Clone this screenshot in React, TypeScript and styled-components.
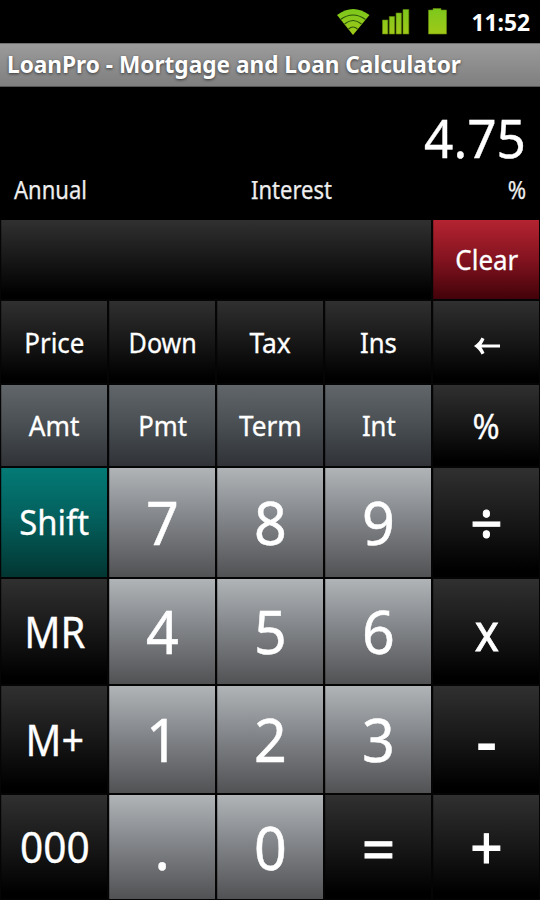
import React from "react";
import styled, { createGlobalStyle } from "styled-components";

const GlobalStyle = createGlobalStyle`
  * { box-sizing: border-box; }
  body { margin: 0; background: #000; }
`;

const Screen = styled.main`
  width: 540px;
  height: 900px;
  display: flex;
  flex-direction: column;
  overflow: hidden;
  background: #000;
  color: #fff;
  font-family: "Noto Sans", sans-serif;
`;

const StatusBar = styled.header`
  height: 43px;
  display: flex;
  align-items: center;
  justify-content: flex-end;
  padding-right: 10px;
`;

const StatusIcons = styled.svg`
  width: 116px;
  height: 43px;
  margin-right: 19px;
`;

const Clock = styled.time`
  display: flex;
  justify-content: flex-end;
  width: 59px;
  font-size: 24px;
  line-height: 43px;
  font-weight: 700;
  white-space: nowrap;
  transform: scaleX(0.95);
  transform-origin: right center;
`;

const TitleBar = styled.div`
  height: 44px;
  display: flex;
  align-items: center;
  padding: 0 0 3px 7px;
  background: linear-gradient(#9b9b9b, #7f7f7f);
  border-top: 1px solid #6f6f6f;
  border-bottom: 1px solid #555;
`;

const Title = styled.h1`
  margin: 0;
  font-size: 23.5px;
  line-height: 32px;
  font-weight: 700;
  white-space: nowrap;
  transform: scaleX(0.963);
  transform-origin: left center;
  text-shadow: 0 1px 3px rgba(0, 0, 0, 0.6);
`;

const Display = styled.section`
  height: 133px;
  padding: 18px 14px 0;
`;

const Value = styled.output`
  display: block;
  height: 67px;
  font-size: 53.5px;
  line-height: 66px;
  text-align: right;
  transform: scaleX(0.96);
  transform-origin: right center;
  -webkit-text-stroke: 0.4px currentColor;
`;

const Captions = styled.div`
  display: grid;
  grid-template-columns: 100px 355px 57px;
  font-size: 24.5px;
  line-height: 36px;
  color: #eee;
`;

const Caption = styled.span<{ $side: "left" | "center" | "right" }>`
  text-align: ${(p) => p.$side};
  transform: scaleX(0.9);
  transform-origin: ${(p) => p.$side} center;
  -webkit-text-stroke: 0.25px currentColor;
`;

const Keypad = styled.section`
  height: 680px;
  display: grid;
  grid-template-columns: repeat(5, 106px);
  grid-template-rows: 79px 82px 81px 109px 105px 107px 104px;
  gap: 2px;
  padding: 0 0 0 1px;
  background: #050505;
`;

type Tone = "black" | "red" | "slate" | "teal" | "silver";

const tones: Record<Tone, string> = {
  black: "linear-gradient(#303030, #171717 50%, #000 94%)",
  red: "linear-gradient(#b52331, #83131f 50%, #420209)",
  slate: "linear-gradient(#606669, #484e52 50%, #303237)",
  teal: "linear-gradient(#047a76, #03605d 45%, #023632)",
  silver: "linear-gradient(#b0b4b7, #83868a 45%, #515254)",
};

const Key = styled.button<{ $tone: Tone; $span?: number }>`
  grid-column: span ${(p) => p.$span ?? 1};
  display: flex;
  align-items: center;
  justify-content: center;
  min-width: 0;
  padding: 0 0 0 1px;
  border: 0;
  color: #fff;
  font-family: inherit;
  background: ${(p) => tones[p.$tone]};
  box-shadow: inset 1px 0 rgba(0, 0, 0, 0.2);
`;

const Label = styled.span<{ $size: number; $stretch: number; $shift: number; $stroke: number }>`
  font-size: ${(p) => p.$size}px;
  line-height: 1;
  white-space: nowrap;
  transform: translateY(${(p) => p.$shift}px) scaleX(${(p) => p.$stretch});
  -webkit-text-stroke: ${(p) => p.$stroke}px currentColor;
`;

const Arrow = styled.svg`
  width: 28px;
  height: 20px;
  transform: translateY(4px);
`;

interface KeySpec {
  text: string;
  tone: Tone;
  size?: number;
  span?: number;
  stretch?: number;
  shift?: number;
  stroke?: number;
}

const digit = (text: string): KeySpec => ({
  text,
  tone: "silver",
  size: 61,
  stretch: 0.94,
  shift: -1,
  stroke: 0.5,
});

const keys: KeySpec[] = [
  { text: "", tone: "black", span: 4 },
  { text: "Clear", tone: "red", stretch: 0.96 },
  { text: "Price", tone: "black", stretch: 0.96 },
  { text: "Down", tone: "black", stretch: 0.93 },
  { text: "Tax", tone: "black", stretch: 0.98 },
  { text: "Ins", tone: "black", stretch: 0.95 },
  { text: "←", tone: "black" },
  { text: "Amt", tone: "slate", stretch: 0.97 },
  { text: "Pmt", tone: "slate", stretch: 0.95 },
  { text: "Term", tone: "slate", stretch: 0.97 },
  { text: "Int", tone: "slate", stretch: 0.95 },
  { text: "%", tone: "black", size: 34, stretch: 0.96 },
  { text: "Shift", tone: "teal", size: 34, stretch: 0.965, shift: -1 },
  digit("7"),
  digit("8"),
  digit("9"),
  { text: "÷", tone: "black", size: 61, stroke: 1, stretch: 0.93, shift: -1 },
  { text: "MR", tone: "black", size: 43, stretch: 0.93 },
  digit("4"),
  digit("5"),
  digit("6"),
  { text: "x", tone: "black", size: 52, stroke: 0.8, stretch: 0.88, shift: -1 },
  { text: "M+", tone: "black", size: 43, stretch: 0.92 },
  digit("1"),
  digit("2"),
  digit("3"),
  { text: "-", tone: "black", size: 61, stroke: 1.8 },
  { text: "000", tone: "black", size: 43, stretch: 0.945, shift: -1 },
  digit("."),
  digit("0"),
  { text: "=", tone: "black", size: 61, stroke: 1, stretch: 0.96 },
  { text: "+", tone: "black", size: 61, stroke: 1.2, stretch: 0.93, shift: -1 },
];

export default function App() {
  return (
    <Screen>
      <GlobalStyle />
      <StatusBar>
        <StatusIcons viewBox="336 0 116 43" aria-hidden>
          <defs>
            <linearGradient id="lime" x1="0" y1="0" x2="0" y2="1">
              <stop offset="0" stopColor="#7cc81c" />
              <stop offset="1" stopColor="#a0c818" />
            </linearGradient>
          </defs>
          <path d="M337 15Q353 3 369.500 15L353 35Z" fill="url(#lime)" />
          <path
            d="M340.500 19.500Q353 10.500 365.500 19.500M344.500 24Q353 17 361.500 24M348.500 29Q353 25 357.500 29"
            fill="none"
            stroke="#27520a"
            strokeWidth="1.100"
          />
          <path
            d="M382.500 20h5.300v14h-5.300zM389.300 16.500h5.300v17.500h-5.300zM396.100 13h5.300v21h-5.300zM403 9.500h5.800v24.500h-5.800z"
            fill="url(#lime)"
            stroke="#668a0c"
            strokeWidth=".6"
          />
          <path
            d="M428.500 10H433V8.500h8V10h5.500v24h-18z"
            fill="url(#lime)"
            stroke="#668a0c"
            strokeWidth=".6"
          />
        </StatusIcons>
        <Clock>11:52</Clock>
      </StatusBar>
      <TitleBar>
        <Title>LoanPro - Mortgage and Loan Calculator</Title>
      </TitleBar>
      <Display>
        <Value>4.75</Value>
        <Captions>
          <Caption $side="left">Annual</Caption>
          <Caption $side="center">Interest</Caption>
          <Caption $side="right">%</Caption>
        </Captions>
      </Display>
      <Keypad>
        {keys.map((k, i) => (
          <Key key={i} $tone={k.tone} $span={k.span} aria-label={k.text || "Blank"}>
            {k.text === "←" ? (
              <Arrow viewBox="0 0 28 20">
                <path
                  d="M1 10Q6 7 8.500 1.500L11.500 3Q10 6.500 8.500 8.500H27V11.500H8.500Q10 13.500 11.500 17L8.500 18.500Q6 13 1 10Z"
                  fill="#fff"
                />
              </Arrow>
            ) : (
              <Label
                $size={k.size ?? 27}
                $stretch={k.stretch ?? 1}
                $shift={k.shift ?? 0}
                $stroke={k.stroke ?? 0.3}
              >
                {k.text}
              </Label>
            )}
          </Key>
        ))}
      </Keypad>
    </Screen>
  );
}
